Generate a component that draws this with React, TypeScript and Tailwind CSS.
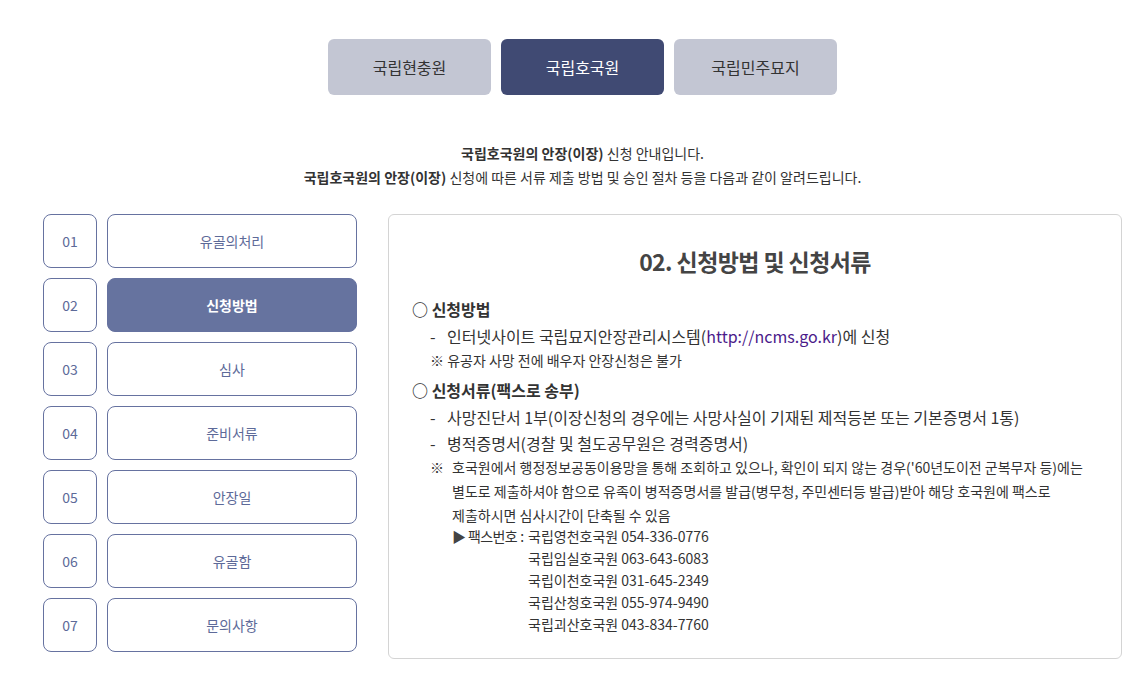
import React from "react";

const font = { fontFamily: '"Noto Sans CJK KR", "Noto Sans", sans-serif' };

const tabs = ["국립현충원", "국립호국원", "국립민주묘지"];
const nav = ["유골의처리", "신청방법", "심사", "준비서류", "안장일", "유골함", "문의사항"];

function Dash({ children, className = "" }: { children: React.ReactNode; className?: string }) {
  return (
    <div className={`flex pl-[18px] text-[16px] leading-[24px] ${className}`}>
      <span className="w-[17px] shrink-0">-</span>
      <span>{children}</span>
    </div>
  );
}

export default function App() {
  return (
    <div className="w-[1142px] h-[692px] bg-white text-[#333]" style={font}>
      <div className="ml-[43px] w-[1079px] pt-[39px]">
        <div className="flex justify-center gap-[10px]">
          {tabs.map((t, i) => (
            <div
              key={t}
              className={`w-[163px] h-[56px] rounded-[6px] flex items-center justify-center text-[16px] ${
                i === 1 ? "bg-[#404a73] text-white" : "bg-[#c3c6d3] text-[#333]"
              }`}
            >
              {t}
            </div>
          ))}
        </div>
        <div className="mt-[46px] text-center text-[14px] leading-[24px] text-[#333]">
          <p>
            <b>국립호국원의 안장(이장)</b> 신청 안내입니다.
          </p>
          <p>
            <b>국립호국원의 안장(이장)</b> 신청에 따른 서류 제출 방법 및 승인 절차 등을 다음과 같이 알려드립니다.
          </p>
        </div>
        <div className="mt-[25px] flex gap-[31px]">
          <div className="flex flex-col gap-[10px]">
            {nav.map((n, i) => (
              <div key={n} className="flex gap-[10px]">
                <div className="w-[54px] h-[54px] rounded-[8px] border border-[#6672a0] flex items-center justify-center text-[14px] text-[#5d6a99]">
                  {String(i + 1).padStart(2, "0")}
                </div>
                <div
                  className={`w-[250px] h-[54px] rounded-[8px] border border-[#6672a0] flex items-center justify-center text-[14px] ${
                    i === 1 ? "bg-[#66739f] text-white font-bold" : "bg-white text-[#5d6a99]"
                  }`}
                >
                  {n}
                </div>
              </div>
            ))}
          </div>
          <div className="w-[735px] h-[445px] rounded-[6px] border border-[#d4d4d4] px-[23px] pt-[28px]">
            <h2 className="text-center text-[23px] font-bold text-[#444] tracking-[-0.6px] leading-[36px]">
              02. 신청방법 및 신청서류
            </h2>
            <div className="mt-[18px] text-[#333]">
              <p className="font-bold text-[16px] leading-[24px]">○ 신청방법</p>
              <Dash className="mt-[3px]">
                인터넷사이트 국립묘지안장관리시스템(<span className="text-[#4b1a8a]">http://ncms.go.kr</span>)에 신청
              </Dash>
              <p className="pl-[18px] text-[14px] leading-[24px]">※ 유공자 사망 전에 배우자 안장신청은 불가</p>
              <p className="mt-[6px] font-bold text-[16px] leading-[24px]">○ 신청서류(팩스로 송부)</p>
              <Dash className="mt-[3px]">사망진단서 1부(이장신청의 경우에는 사망사실이 기재된 제적등본 또는 기본증명서 1통)</Dash>
              <Dash className="mt-[2px]">병적증명서(경찰 및 철도공무원은 경력증명서)</Dash>
              <div className="pl-[18px] text-[14px] leading-[24px]">
                <div className="flex">
                  <span className="w-[22px] shrink-0">※</span>
                  <div>
                    <p>호국원에서 행정정보공동이용망을 통해 조회하고 있으나, 확인이 되지 않는 경우('60년도이전 군복무자 등)에는</p>
                    <p>별도로 제출하셔야 함으로 유족이 병적증명서를 발급(병무청, 주민센터등 발급)받아 해당 호국원에 팩스로</p>
                    <p>제출하시면 심사시간이 단축될 수 있음</p>
                    <div className="flex leading-[22px] -mt-[2px]">
                      <div className="w-[76px] shrink-0 flex whitespace-nowrap">
                        <span className="w-[16px] shrink-0 text-[#444]">▶</span>
                        <span className="tracking-[-0.6px]">팩스번호</span>
                        <span className="ml-[3px]">:</span>
                      </div>
                      <div>
                        <p>국립영천호국원 054-336-0776</p>
                        <p>국립임실호국원 063-643-6083</p>
                        <p>국립이천호국원 031-645-2349</p>
                        <p>국립산청호국원 055-974-9490</p>
                        <p>국립괴산호국원 043-834-7760</p>
                      </div>
                    </div>
                  </div>
                </div>
              </div>
            </div>
          </div>
        </div>
      </div>
    </div>
  );
}
